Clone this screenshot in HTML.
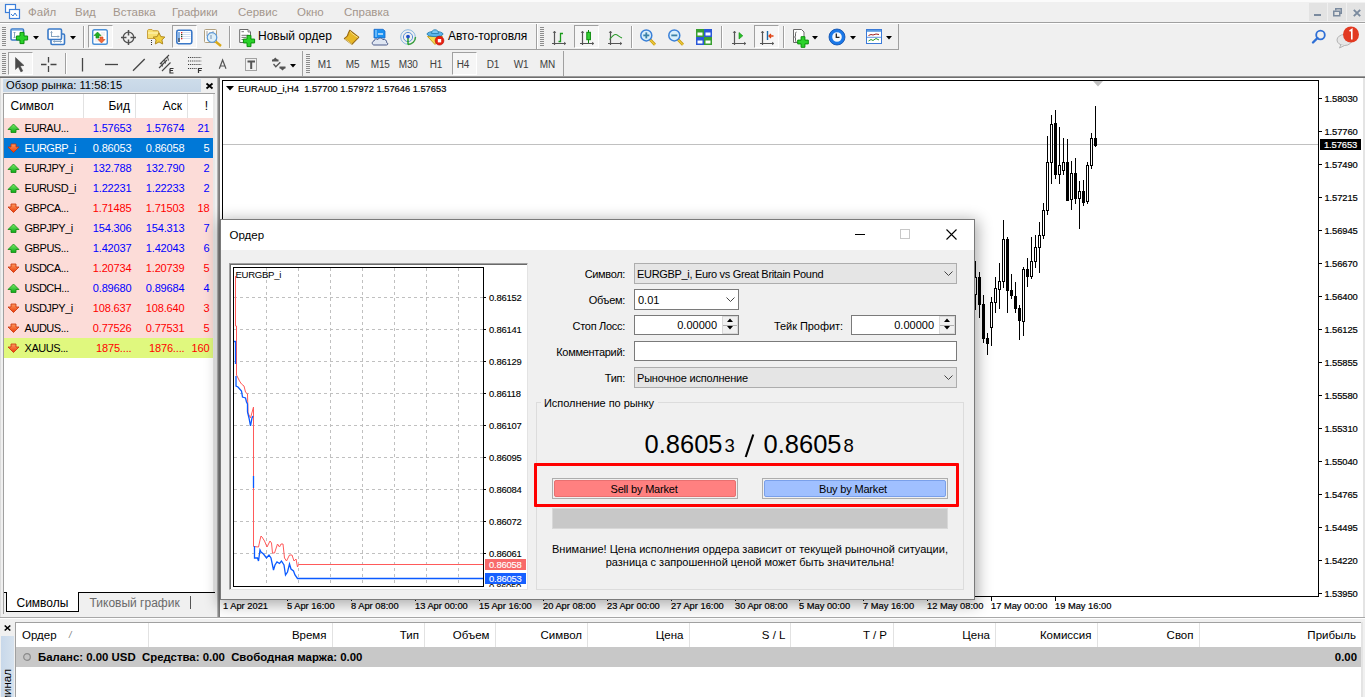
<!DOCTYPE html><html><head><meta charset="utf-8"><style>
*{box-sizing:border-box;margin:0;padding:0}
body{width:1365px;height:697px;overflow:hidden;background:#f0f0f0;position:relative;font-family:"Liberation Sans",sans-serif;color:#000}
.a{position:absolute}
.t{position:absolute;white-space:nowrap;line-height:1}
svg{position:absolute;overflow:visible}
</style></head><body><div class="a" style="left:0px;top:0px;width:1365px;height:22px;background:#f0f0f0"></div>
<svg style="left:4px;top:3px" width="17" height="17" viewBox="0 0 17 17"><rect x="1.5" y="1.5" width="10" height="8" fill="#fff" stroke="#3c7fd9" stroke-width="1.2"/><rect x="5.5" y="6.5" width="10" height="9" fill="#fff" stroke="#3c7fd9" stroke-width="1.2"/><path d="M7 11l2 2 2-3 2 3" stroke="#3c7fd9" fill="none" stroke-width="1"/></svg>
<div class="t" style="left:28px;top:7px;font-size:11.5px;color:#a3968c;">Файл</div>
<div class="t" style="left:75px;top:7px;font-size:11.5px;color:#a3968c;">Вид</div>
<div class="t" style="left:113px;top:7px;font-size:11.5px;color:#a3968c;">Вставка</div>
<div class="t" style="left:172px;top:7px;font-size:11.5px;color:#a3968c;">Графики</div>
<div class="t" style="left:238px;top:7px;font-size:11.5px;color:#a3968c;">Сервис</div>
<div class="t" style="left:297px;top:7px;font-size:11.5px;color:#a3968c;">Окно</div>
<div class="t" style="left:344px;top:7px;font-size:11.5px;color:#a3968c;">Справка</div>
<div class="a" style="left:0px;top:0px;width:1365px;height:2px;background:#fbfbfb"></div>
<div class="a" style="left:1309px;top:3px;width:18px;height:18px;background:#e3e3e3"></div>
<div class="a" style="left:1328px;top:3px;width:18px;height:18px;background:#e3e3e3"></div>
<div class="a" style="left:1347px;top:3px;width:18px;height:18px;background:#e3e3e3"></div>
<div class="a" style="left:1314px;top:14px;width:7px;height:2px;background:#7a8a9e"></div>
<svg style="left:1333px;top:8px" width="9" height="9" viewBox="0 0 9 9"><rect x="0.75" y="3.25" width="6" height="4.5" fill="none" stroke="#7a8a9e" stroke-width="1.5"/><path d="M2.75 2.5V0.75h5.5v4.5H7" fill="none" stroke="#7a8a9e" stroke-width="1.5"/></svg>
<svg style="left:1353px;top:9px" width="8" height="8" viewBox="0 0 8 8"><path d="M0.8 0.8L7.2 7.2M7.2 0.8L0.8 7.2" stroke="#7a8a9e" stroke-width="1.9"/></svg>
<div class="a" style="left:0px;top:22px;width:1365px;height:1px;background:#a0a0a0"></div>
<div class="a" style="left:0px;top:23px;width:1365px;height:1px;background:#fff"></div>
<div class="a" style="left:2px;top:27px;width:4px;height:1px;background:#8c8c8c"></div>
<div class="a" style="left:2px;top:29px;width:4px;height:1px;background:#8c8c8c"></div>
<div class="a" style="left:2px;top:31px;width:4px;height:1px;background:#8c8c8c"></div>
<div class="a" style="left:2px;top:33px;width:4px;height:1px;background:#8c8c8c"></div>
<div class="a" style="left:2px;top:35px;width:4px;height:1px;background:#8c8c8c"></div>
<div class="a" style="left:2px;top:37px;width:4px;height:1px;background:#8c8c8c"></div>
<div class="a" style="left:2px;top:39px;width:4px;height:1px;background:#8c8c8c"></div>
<div class="a" style="left:2px;top:41px;width:4px;height:1px;background:#8c8c8c"></div>
<div class="a" style="left:2px;top:43px;width:4px;height:1px;background:#8c8c8c"></div>
<div class="a" style="left:2px;top:45px;width:4px;height:1px;background:#8c8c8c"></div>
<div class="a" style="left:0px;top:49px;width:899px;height:1px;background:#a0a0a0"></div>
<div class="a" style="left:898px;top:24px;width:1px;height:26px;background:#a0a0a0"></div>
<div class="a" style="left:88px;top:25px;width:25px;height:23px;background:#f6f6f6;border-left:1px solid #a0a0a0;border-top:1px solid #a0a0a0;border-right:1px solid #fff;border-bottom:1px solid #fff"></div>
<div class="a" style="left:172px;top:25px;width:25px;height:23px;background:#f6f6f6;border-left:1px solid #a0a0a0;border-top:1px solid #a0a0a0;border-right:1px solid #fff;border-bottom:1px solid #fff"></div>
<div class="a" style="left:574px;top:25px;width:25px;height:23px;background:#f6f6f6;border-left:1px solid #a0a0a0;border-top:1px solid #a0a0a0;border-right:1px solid #fff;border-bottom:1px solid #fff"></div>
<div class="a" style="left:754px;top:25px;width:25px;height:23px;background:#f6f6f6;border-left:1px solid #a0a0a0;border-top:1px solid #a0a0a0;border-right:1px solid #fff;border-bottom:1px solid #fff"></div>
<svg style="left:0px;top:0px" width="1365" height="80" viewBox="0 0 1365 80"><rect x="11" y="29" width="12.5" height="11" rx="1.2" fill="#fff" stroke="#3a7ac8" stroke-width="1.6"/><path d="M11.5 30.2h11.5" stroke="#7ab0e8"/><path d="M14.5 32v6M13.5 33l1-1 1 1M13.5 37l1 1 1-1" stroke="#7a9ab8" fill="none" stroke-width="0.9"/><path d="M20.0 32.4h4v3.5999999999999996h3.5999999999999996v4h-3.5999999999999996v3.5999999999999996h-4v-3.5999999999999996h-3.5999999999999996v-4h3.5999999999999996z" fill="#2ad22a" stroke="#0a900a" stroke-width="1"/><rect x="51" y="34" width="13.5" height="10.5" rx="1.2" fill="#fff" stroke="#3a7ac8" stroke-width="1.6"/><rect x="48" y="29" width="13.5" height="10.5" rx="1.2" fill="#fff" stroke="#3a7ac8" stroke-width="1.6"/><path d="M51.5 31.5v5M50.5 32.5l1-1 1 1M51 36.5h8M58 35.5l1 1-1 1M53.5 41.5h8M54.5 40.5l-1 1 1 1M60.5 40.5l1 1-1 1" stroke="#7a9ab8" fill="none" stroke-width="0.9"/><rect x="92.7" y="29.7" width="14.6" height="14.6" rx="1.8" fill="#fff" stroke="#4a90d8" stroke-width="1.4"/><path d="M95 37h6M95 39h4M95 41h6M101 33h4M101 35h4" stroke="#d8d8d8" stroke-width="0.7"/><path d="M97.5 32L101 35.5H99v2.5h-3v-2.5H94z" fill="#22b022" stroke="#108a10" stroke-width="0.6"/><path d="M101.5 43L105 39.5H103V37h-3v2.5H98z" fill="#f06a3a" stroke="#d04010" stroke-width="0.6"/><circle cx="128.5" cy="37.5" r="5.3" fill="none" stroke="#555" stroke-width="1.3"/><path d="M128.5 30v5.5M128.5 39.5V45M121 37.5h5.5M130.5 37.5H136" stroke="#505050" stroke-width="1.5"/><path d="M147.5 31c0-1 .6-1.5 1.5-1.5h3l1 1.2h4.5c.8 0 1.2.4 1.2 1.2v6.6h-11.2z" fill="#f8e070" stroke="#c8a040" stroke-width="1"/><path d="M148 33h10" stroke="#fff6c0"/><path d="M159 32.8l1.8 3.8 4.1.5-3 2.8.8 4.1-3.7-2.1-3.7 2.1.8-4.1-3-2.8 4.1-.5z" fill="#f2d040" stroke="#b08a20" stroke-width="1"/><path d="M151.5 40v1M151.5 42v1M151.5 44v1" stroke="#333" stroke-width="1"/><rect x="176.8" y="30.3" width="15" height="13.4" rx="1.6" fill="#fff" stroke="#3a78c8" stroke-width="1.6"/><path d="M179 32v10" stroke="#6aa0e0" stroke-width="1.6"/><path d="M179 38v4" stroke="#444" stroke-width="1.2"/><path d="M182 32.5h8.5M182 34.5h8.5M182 36.5h8.5M182 38.5h8.5" stroke="#c8d8f0" stroke-width="0.8"/><rect x="181" y="32" width="1.3" height="1.3" fill="#e02020"/><rect x="181" y="34" width="1.3" height="1.3" fill="#204020"/><rect x="181" y="36" width="1.3" height="1.3" fill="#204020"/><rect x="181" y="38" width="1.3" height="1.3" fill="#e02020"/><rect x="204.5" y="29.5" width="12" height="13" rx="1" fill="#fbfbf8" stroke="#b0a080" stroke-width="1"/><path d="M207 31v5M209 33h3M213 31v4" stroke="#888" stroke-width="0.8"/><path d="M215.5 41.5l5.5 4.5" stroke="#d8a818" stroke-width="2.4"/><circle cx="212" cy="37.5" r="4.8" fill="#d8ecf8" fill-opacity="0.85" stroke="#5a98d8" stroke-width="1.2"/><path d="M211 35v4" stroke="#9ab0c8" stroke-width="1.5"/><path d="M239.7 29.5h8.3l2.5 2.5v10.5h-10.8z" fill="#fff" stroke="#6a6a6a" stroke-width="1"/><path d="M248 29.5v2.5h2.5" fill="#ddd" stroke="#6a6a6a" stroke-width="0.8"/><path d="M241.5 31.7h2.5M241.5 35.3h7M241.5 37.4h5M241.5 39.5h4" stroke="#777" stroke-width="1"/><path d="M247.05 35.4h3.9v3.6499999999999995h3.6499999999999995v3.9h-3.6499999999999995v3.6499999999999995h-3.9v-3.6499999999999995h-3.6499999999999995v-3.9h3.6499999999999995z" fill="#2ad22a" stroke="#0a900a" stroke-width="1"/><path d="M349.7 30.3l9 7-6.8 7-7.5-5.8c1.2-.8 3.8-2.6 3.8-5z" fill="#e8b828" stroke="#9a6a10" stroke-width="1.1" stroke-linejoin="round"/><path d="M345 38.8l7 5.5M350 31c1 2 4 4 8 6.5" stroke="#fff2a0" stroke-width="0.8" fill="none"/><path d="M374 29.3h9l2 1.7v7h-11z" fill="#1a90f0" stroke="#1868c8" stroke-width="0.8"/><path d="M376 30v7" stroke="#c8e8ff" stroke-width="0.9"/><path d="M378 34h5" stroke="#fff" stroke-width="1.2"/><path d="M374 45c-2.2 0-2.5-3.6 0-4 .2-2 2.5-2.6 3.8-1.5 1-2 4-2 5 0 2.5-.6 4.2 1.2 3.8 3 1.8.4 1.5 2.5 0 2.5z" fill="#dfe6f2" stroke="#4a5a8a" stroke-width="1"/><circle cx="408" cy="37" r="7.3" fill="none" stroke="#8ab8e0" stroke-width="1"/><circle cx="408" cy="37" r="4.6" fill="none" stroke="#5a90d8" stroke-width="1"/><path d="M408 44.5A7.5 7.5 0 0 0 415.5 37" stroke="#3aa03a" stroke-width="1.4" fill="none"/><path d="M408 37v7.5" stroke="#1aa01a" stroke-width="1.4"/><circle cx="408" cy="36.6" r="1.9" fill="#2050c8"/><path d="M427.5 36.5h15L435 44.5z" fill="#f4dc50" stroke="#c8a020" stroke-width="1" stroke-linejoin="round"/><ellipse cx="435" cy="34" rx="8" ry="2.6" fill="#5ab4ea" stroke="#2a80b0" stroke-width="0.9"/><path d="M431.5 33.5c0-2.5 1.5-3.7 3.5-3.7s3.5 1.2 3.5 3.7z" fill="#7ac8f4" stroke="#2a80b0" stroke-width="0.9"/><circle cx="439.5" cy="40.7" r="4.4" fill="#e82010" stroke="#b01008" stroke-width="0.6"/><rect x="437.8" y="39" width="3.4" height="3.4" fill="#fff"/><path d="M554.5 31.5v13.5M552 43.5h13.5" stroke="#555" stroke-width="1.2" fill="none"/><path d="M553.2 32.8l1.3-1.6 1.3 1.6M564.2 42.2l1.6 1.3-1.6 1.3" stroke="#555" stroke-width="1" fill="none"/><path d="M558.5 41.5h2v-8h2.5" stroke="#1a9a1a" stroke-width="1.3" fill="none"/><path d="M582.5 31.5v13.5M580 43.5h13.5" stroke="#555" stroke-width="1.2" fill="none"/><path d="M581.2 32.8l1.3-1.6 1.3 1.6M592.2 42.2l1.6 1.3-1.6 1.3" stroke="#555" stroke-width="1" fill="none"/><path d="M588.5 30v13" stroke="#0a8a0a" stroke-width="1"/><rect x="586.8" y="32.3" width="3.6" height="7.4" fill="#36d236" stroke="#0a8a0a" stroke-width="1"/><path d="M610.5 31.5v13.5M608 43.5h13.5" stroke="#555" stroke-width="1.2" fill="none"/><path d="M609.2 32.8l1.3-1.6 1.3 1.6M620.2 42.2l1.6 1.3-1.6 1.3" stroke="#555" stroke-width="1" fill="none"/><path d="M609.5 39.5c2-2.5 4-5 6-5s3 2 6.5 3.5" stroke="#2a9a2a" stroke-width="1.1" fill="none"/><path d="M650 39.5l5 5.3" stroke="#c89a10" stroke-width="2.8"/><path d="M650.3 39.8l4.5 4.8" stroke="#f0d040" stroke-width="1.2"/><circle cx="646.3" cy="35.4" r="5.5" fill="#d8eefa" stroke="#3a80d8" stroke-width="1.5"/><path d="M643.3 35.4h6" stroke="#3a80a8" stroke-width="1.8"/><path d="M646.3 32.4v6" stroke="#3a80a8" stroke-width="1.8"/><path d="M678 39.5l5 5.3" stroke="#c89a10" stroke-width="2.8"/><path d="M678.3 39.8l4.5 4.8" stroke="#f0d040" stroke-width="1.2"/><circle cx="674.3" cy="35.4" r="5.5" fill="#d8eefa" stroke="#3a80d8" stroke-width="1.5"/><path d="M671.3 35.4h6" stroke="#3a80a8" stroke-width="1.8"/><rect x="696" y="29" width="8" height="8" fill="#38a030"/><rect x="704" y="29" width="8" height="8" fill="#2a58d8"/><rect x="696" y="37" width="8" height="8" fill="#2a58d8"/><rect x="704" y="37" width="8" height="8" fill="#38a030"/><path d="M697.5 32.5h5v3h-5zM705.5 32.5h5v3h-5zM697.5 40.5h5v3h-5zM705.5 40.5h5v3h-5z" fill="#fff"/><path d="M734.5 31.5v13.5M732 43.5h13.5" stroke="#555" stroke-width="1.2" fill="none"/><path d="M733.2 32.8l1.3-1.6 1.3 1.6M744.2 42.2l1.6 1.3-1.6 1.3" stroke="#555" stroke-width="1" fill="none"/><path d="M739 32.5v6.5l3.8-3.2z" fill="#28c028" stroke="#108a10" stroke-width="0.6"/><path d="M762.5 31.5v13.5M760 43.5h13.5" stroke="#555" stroke-width="1.2" fill="none"/><path d="M761.2 32.8l1.3-1.6 1.3 1.6M772.2 42.2l1.6 1.3-1.6 1.3" stroke="#555" stroke-width="1" fill="none"/><path d="M767.5 31v9" stroke="#1a6aa8" stroke-width="1.4"/><path d="M773.5 36h-4.5M771 34l-2 2 2 2" stroke="#e04010" stroke-width="1.3" fill="none"/><path d="M793.5 29.5h8l2.5 2.5v10.5h-10.5z" fill="#fff" stroke="#6a6a6a" stroke-width="1"/><path d="M796.5 32c-1 0-1 1-1 2v2c0 1-1 1-1 1 0 0 1 0 1 1v2c0 1 0 2 1 2" stroke="#555" fill="none" stroke-width="0.9"/><path d="M801.1 36.7h3.8v3.4h3.4v3.8h-3.4v3.4h-3.8v-3.4h-3.4v-3.8h3.4z" fill="#2ad22a" stroke="#0a900a" stroke-width="1"/><circle cx="837" cy="37" r="6.4" fill="#f4f8fc" stroke="#1a78e8" stroke-width="3.2"/><circle cx="837" cy="37" r="8" fill="none" stroke="#0a4aa8" stroke-width="0.8"/><path d="M836.3 33.5v3.8h3.2" stroke="#222" stroke-width="1.3" fill="none"/><rect x="866.5" y="29.5" width="15" height="14" fill="#fff" stroke="#3a7ad8" stroke-width="1"/><rect x="867" y="30" width="14" height="1.8" fill="#5a9ae0"/><path d="M867 37.3h14" stroke="#3a7ad8" stroke-width="0.8"/><path d="M868.5 35.5l2.5-1 2 .5 3-1 3 .5" stroke="#a02020" fill="none"/><path d="M868.5 41l2.5-1.5 2 1 3-2 3 1.5" stroke="#2a9a2a" fill="none"/></svg>
<svg style="left:33px;top:36px" width="6" height="4" viewBox="0 0 6 4"><path d="M0 0h6L3 3.5z" fill="#000"/></svg>
<svg style="left:70px;top:36px" width="6" height="4" viewBox="0 0 6 4"><path d="M0 0h6L3 3.5z" fill="#000"/></svg>
<div class="a" style="left:83px;top:26px;width:1px;height:22px;background:#a0a0a0"></div>
<div class="a" style="left:84px;top:26px;width:1px;height:22px;background:#fff"></div>
<div class="a" style="left:229px;top:26px;width:1px;height:22px;background:#a0a0a0"></div>
<div class="a" style="left:230px;top:26px;width:1px;height:22px;background:#fff"></div>
<div class="t" style="left:258px;top:30px;font-size:12px;color:#000;">Новый ордер</div>
<div class="t" style="left:448px;top:30px;font-size:12px;color:#000;">Авто-торговля</div>
<div class="a" style="left:536px;top:24px;width:1px;height:25px;background:#a0a0a0"></div>
<div class="a" style="left:537px;top:24px;width:1px;height:25px;background:#fff"></div>
<div class="a" style="left:540px;top:27px;width:4px;height:1px;background:#8c8c8c"></div>
<div class="a" style="left:540px;top:29px;width:4px;height:1px;background:#8c8c8c"></div>
<div class="a" style="left:540px;top:31px;width:4px;height:1px;background:#8c8c8c"></div>
<div class="a" style="left:540px;top:33px;width:4px;height:1px;background:#8c8c8c"></div>
<div class="a" style="left:540px;top:35px;width:4px;height:1px;background:#8c8c8c"></div>
<div class="a" style="left:540px;top:37px;width:4px;height:1px;background:#8c8c8c"></div>
<div class="a" style="left:540px;top:39px;width:4px;height:1px;background:#8c8c8c"></div>
<div class="a" style="left:540px;top:41px;width:4px;height:1px;background:#8c8c8c"></div>
<div class="a" style="left:540px;top:43px;width:4px;height:1px;background:#8c8c8c"></div>
<div class="a" style="left:540px;top:45px;width:4px;height:1px;background:#8c8c8c"></div>
<div class="a" style="left:631px;top:26px;width:1px;height:22px;background:#a0a0a0"></div>
<div class="a" style="left:632px;top:26px;width:1px;height:22px;background:#fff"></div>
<div class="a" style="left:721px;top:26px;width:1px;height:22px;background:#a0a0a0"></div>
<div class="a" style="left:722px;top:26px;width:1px;height:22px;background:#fff"></div>
<div class="a" style="left:783px;top:26px;width:1px;height:22px;background:#a0a0a0"></div>
<div class="a" style="left:784px;top:26px;width:1px;height:22px;background:#fff"></div>
<svg style="left:812px;top:36px" width="6" height="4" viewBox="0 0 6 4"><path d="M0 0h6L3 3.5z" fill="#000"/></svg>
<svg style="left:850px;top:36px" width="6" height="4" viewBox="0 0 6 4"><path d="M0 0h6L3 3.5z" fill="#000"/></svg>
<svg style="left:886px;top:36px" width="6" height="4" viewBox="0 0 6 4"><path d="M0 0h6L3 3.5z" fill="#000"/></svg>
<div class="a" style="left:2px;top:53px;width:4px;height:1px;background:#8c8c8c"></div>
<div class="a" style="left:2px;top:55px;width:4px;height:1px;background:#8c8c8c"></div>
<div class="a" style="left:2px;top:57px;width:4px;height:1px;background:#8c8c8c"></div>
<div class="a" style="left:2px;top:59px;width:4px;height:1px;background:#8c8c8c"></div>
<div class="a" style="left:2px;top:61px;width:4px;height:1px;background:#8c8c8c"></div>
<div class="a" style="left:2px;top:63px;width:4px;height:1px;background:#8c8c8c"></div>
<div class="a" style="left:2px;top:65px;width:4px;height:1px;background:#8c8c8c"></div>
<div class="a" style="left:2px;top:67px;width:4px;height:1px;background:#8c8c8c"></div>
<div class="a" style="left:2px;top:69px;width:4px;height:1px;background:#8c8c8c"></div>
<div class="a" style="left:2px;top:71px;width:4px;height:1px;background:#8c8c8c"></div>
<div class="a" style="left:2px;top:73px;width:4px;height:1px;background:#8c8c8c"></div>
<div class="a" style="left:8px;top:52px;width:25px;height:23px;background:#f6f6f6;border-left:1px solid #a0a0a0;border-top:1px solid #a0a0a0;border-right:1px solid #fff;border-bottom:1px solid #fff"></div>
<svg style="left:0px;top:0px" width="1365" height="80" viewBox="0 0 1365 80"><path d="M15.5 57.5l8.5 8-3.8.4 2.6 5-1.9 1-2.6-5.1-2.8 2.7z" fill="#4a4a4a" stroke="#444" stroke-width="0.5" stroke-linejoin="round"/><path d="M48.5 57v5.5M48.5 66v6M41 64.5h5.5M50.5 64.5h6" stroke="#454545" stroke-width="1.3"/><path d="M82.5 58v13.5" stroke="#454545" stroke-width="1.3"/><path d="M105 64.5h13" stroke="#454545" stroke-width="1.3"/><path d="M133 70.8L144.7 59" stroke="#454545" stroke-width="1.3"/><path d="M159 68l8-8M162 71l8.5-8.5M160 64l9-9" stroke="#454545" stroke-width="1.1"/><path d="M161.5 62.5l1 4M164.5 59.5l1 4M167.5 57l1 3.5" stroke="#454545" stroke-width="1"/><path d="M170 68.5h3.5M170 68.5v4.5h3.5M170 70.5h3" stroke="#333" stroke-width="1.2" fill="none"/><path d="M188 57.5h13.5" stroke="#333" stroke-dasharray="1 0.9" stroke-width="1"/><path d="M188 61h13.5" stroke="#333" stroke-dasharray="1 0.9" stroke-width="1"/><path d="M188 64.5h13.5" stroke="#333" stroke-dasharray="1 0.9" stroke-width="1"/><path d="M188 68.5h9" stroke="#333" stroke-dasharray="1 0.9" stroke-width="1"/><path d="M198.5 73v-4.5h3.5M198.5 70.5h3" stroke="#333" stroke-width="1.2" fill="none"/><path d="M219.3 68.8l3.3-8.8 3.4 8.8M220.5 66h4.3" stroke="#555" stroke-width="1.2" fill="none"/><rect x="245.5" y="58.5" width="11" height="12" fill="none" stroke="#555" stroke-dasharray="1 1" stroke-width="1"/><path d="M247.5 61.5h7.5M251.2 61.5v7.5" stroke="#555" stroke-width="2"/><path d="M275.3 57.5l3 3h-6zM282.5 70.5l-3-3h6z" fill="#555"/><path d="M273.5 64l2.3 2.7 4.5-4.5" stroke="#555" stroke-width="1.3" fill="none"/><path d="M272 60.5h6.5M279.5 67.5h6" stroke="#555" stroke-width="2"/></svg>
<div class="a" style="left:65px;top:53px;width:1px;height:21px;background:#a0a0a0"></div>
<div class="a" style="left:66px;top:53px;width:1px;height:21px;background:#fff"></div>
<svg style="left:290px;top:64px" width="6" height="4" viewBox="0 0 6 4"><path d="M0 0h6L3 3.5z" fill="#000"/></svg>
<div class="a" style="left:302px;top:51px;width:1px;height:26px;background:#a0a0a0"></div>
<div class="a" style="left:306px;top:54px;width:4px;height:1px;background:#8c8c8c"></div>
<div class="a" style="left:306px;top:56px;width:4px;height:1px;background:#8c8c8c"></div>
<div class="a" style="left:306px;top:58px;width:4px;height:1px;background:#8c8c8c"></div>
<div class="a" style="left:306px;top:60px;width:4px;height:1px;background:#8c8c8c"></div>
<div class="a" style="left:306px;top:62px;width:4px;height:1px;background:#8c8c8c"></div>
<div class="a" style="left:306px;top:64px;width:4px;height:1px;background:#8c8c8c"></div>
<div class="a" style="left:306px;top:66px;width:4px;height:1px;background:#8c8c8c"></div>
<div class="a" style="left:306px;top:68px;width:4px;height:1px;background:#8c8c8c"></div>
<div class="a" style="left:306px;top:70px;width:4px;height:1px;background:#8c8c8c"></div>
<div class="a" style="left:306px;top:72px;width:4px;height:1px;background:#8c8c8c"></div>
<div class="a" style="left:452px;top:52px;width:25px;height:23px;background:#f6f6f6;border-left:1px solid #a0a0a0;border-top:1px solid #a0a0a0;border-right:1px solid #fff;border-bottom:1px solid #fff"></div>
<div class="t" style="left:317.8px;top:59.8px;font-size:10px;color:#404040;letter-spacing:-0.2px">M1</div>
<div class="t" style="left:345.8px;top:59.8px;font-size:10px;color:#404040;letter-spacing:-0.2px">M5</div>
<div class="t" style="left:370.8px;top:59.8px;font-size:10px;color:#404040;letter-spacing:-0.2px">M15</div>
<div class="t" style="left:398.8px;top:59.8px;font-size:10px;color:#404040;letter-spacing:-0.2px">M30</div>
<div class="t" style="left:429.8px;top:59.8px;font-size:10px;color:#404040;letter-spacing:-0.2px">H1</div>
<div class="t" style="left:456.8px;top:59.8px;font-size:10px;color:#404040;letter-spacing:-0.2px">H4</div>
<div class="t" style="left:486.8px;top:59.8px;font-size:10px;color:#404040;letter-spacing:-0.2px">D1</div>
<div class="t" style="left:513.8px;top:59.8px;font-size:10px;color:#404040;letter-spacing:-0.2px">W1</div>
<div class="t" style="left:539.8px;top:59.8px;font-size:10px;color:#404040;letter-spacing:-0.2px">MN</div>
<div class="a" style="left:563px;top:51px;width:1px;height:26px;background:#a0a0a0"></div>
<svg style="left:1311px;top:29px" width="16" height="16" viewBox="0 0 16 16"><circle cx="9.5" cy="6" r="4.3" fill="none" stroke="#2e6fd6" stroke-width="1.8"/><path d="M6.5 9L2 13.5" stroke="#2e6fd6" stroke-width="2.4" stroke-linecap="round"/></svg>
<svg style="left:1336px;top:26px" width="26" height="22" viewBox="0 0 26 22"><ellipse cx="8.5" cy="14" rx="7.5" ry="5.5" fill="#e6e6e6" stroke="#b4b4b4"/><path d="M5 18.5l-1.5 3.5 5-2.5" fill="#e6e6e6" stroke="#b4b4b4"/><circle cx="15" cy="8.5" r="8" fill="#e23a22"/><path d="M13.5 5.2L15.8 3.6V13.5" stroke="#fff" stroke-width="1.6" fill="none"/></svg>
<div class="a" style="left:0px;top:76px;width:1365px;height:1px;background:#9a9a9a"></div>
<div class="a" style="left:0px;top:77px;width:1365px;height:1px;background:#6e6e6e"></div>
<div class="a" style="left:0px;top:78px;width:1px;height:540px;background:#dcdcdc"></div>
<div class="a" style="left:217px;top:78px;width:1px;height:540px;background:#b4b4b4"></div>
<div class="a" style="left:218px;top:78px;width:1px;height:540px;background:#8a8a8a"></div>
<div class="a" style="left:3px;top:79px;width:198px;height:13px;background:linear-gradient(#cddcea,#c6d6e6)"></div>
<div class="t" style="left:6px;top:80px;font-size:11.2px;color:#000;">Обзор рынка: 11:58:15</div>
<svg style="left:206px;top:83px" width="7" height="6" viewBox="0 0 7 6"><path d="M0.5 0.5l6 5M6.5 0.5l-6 5" stroke="#000" stroke-width="1.8"/></svg>
<div class="a" style="left:3px;top:93px;width:212px;height:1px;background:#a0a0a0"></div>
<div class="a" style="left:3px;top:93px;width:1px;height:521px;background:#a0a0a0"></div>
<div class="a" style="left:4px;top:94px;width:209px;height:498px;background:#fff"></div>
<div class="a" style="left:213px;top:94px;width:2px;height:498px;background:#e8e8e8"></div>
<div class="a" style="left:83px;top:94px;width:1px;height:24px;background:#e2e2e2"></div>
<div class="a" style="left:135px;top:94px;width:1px;height:24px;background:#e2e2e2"></div>
<div class="a" style="left:187px;top:94px;width:1px;height:24px;background:#e2e2e2"></div>
<div class="t" style="left:10.5px;top:100px;font-size:12px;color:#000;">Символ</div>
<div class="t" style="right:1235px;top:100px;font-size:12px;color:#000;">Бид</div>
<div class="t" style="right:1183px;top:100px;font-size:12px;color:#000;">Аск</div>
<div class="t" style="right:1157px;top:100px;font-size:12px;color:#000;">!</div>
<svg style="left:0px;top:0px" width="1" height="1" viewBox="0 0 1 1"><defs><linearGradient id="gu" x1="0" y1="0" x2="0" y2="1"><stop offset="0" stop-color="#7aec6a"/><stop offset="1" stop-color="#10a818"/></linearGradient><linearGradient id="gd" x1="0" y1="0" x2="0" y2="1"><stop offset="0" stop-color="#ff9a60"/><stop offset="1" stop-color="#e83a08"/></linearGradient></defs></svg>
<div class="a" style="left:4px;top:118px;width:209px;height:20px;background:#fcdcd8"></div>
<svg style="left:8px;top:123px" width="11" height="10" viewBox="0 0 11 10"><path d="M5.5 1L11 6.5H8V9.5H3V6.5H0z" fill="url(#gu)" stroke="#108a10" stroke-width="0.8" stroke-linejoin="round"/></svg>
<div class="t" style="left:24.5px;top:122.8px;font-size:11px;color:#000;letter-spacing:-0.45px">EURAU...</div>
<div class="t" style="right:1233.5px;top:122.8px;font-size:11px;color:#0000ff;letter-spacing:-0.15px">1.57653</div>
<div class="t" style="right:1180.5px;top:122.8px;font-size:11px;color:#0000ff;letter-spacing:-0.15px">1.57674</div>
<div class="t" style="right:1155.5px;top:122.8px;font-size:11px;color:#0000ff;letter-spacing:-0.15px">21</div>
<div class="a" style="left:4px;top:138px;width:209px;height:20px;background:#0078d7"></div>
<svg style="left:8px;top:143px" width="11" height="10" viewBox="0 0 11 10"><path d="M5.5 9.5L11 4H8V1H3V4H0z" fill="url(#gd)" stroke="#c83008" stroke-width="0.8" stroke-linejoin="round"/></svg>
<div class="t" style="left:24.5px;top:142.8px;font-size:11px;color:#fff;letter-spacing:-0.45px">EURGBP_i</div>
<div class="t" style="right:1233.5px;top:142.8px;font-size:11px;color:#fff;letter-spacing:-0.15px">0.86053</div>
<div class="t" style="right:1180.5px;top:142.8px;font-size:11px;color:#fff;letter-spacing:-0.15px">0.86058</div>
<div class="t" style="right:1155.5px;top:142.8px;font-size:11px;color:#fff;letter-spacing:-0.15px">5</div>
<div class="a" style="left:4px;top:158px;width:209px;height:20px;background:#fcdcd8"></div>
<svg style="left:8px;top:163px" width="11" height="10" viewBox="0 0 11 10"><path d="M5.5 1L11 6.5H8V9.5H3V6.5H0z" fill="url(#gu)" stroke="#108a10" stroke-width="0.8" stroke-linejoin="round"/></svg>
<div class="t" style="left:24.5px;top:162.8px;font-size:11px;color:#000;letter-spacing:-0.45px">EURJPY_i</div>
<div class="t" style="right:1233.5px;top:162.8px;font-size:11px;color:#0000ff;letter-spacing:-0.15px">132.788</div>
<div class="t" style="right:1180.5px;top:162.8px;font-size:11px;color:#0000ff;letter-spacing:-0.15px">132.790</div>
<div class="t" style="right:1155.5px;top:162.8px;font-size:11px;color:#0000ff;letter-spacing:-0.15px">2</div>
<div class="a" style="left:4px;top:178px;width:209px;height:20px;background:#fcdcd8"></div>
<svg style="left:8px;top:183px" width="11" height="10" viewBox="0 0 11 10"><path d="M5.5 1L11 6.5H8V9.5H3V6.5H0z" fill="url(#gu)" stroke="#108a10" stroke-width="0.8" stroke-linejoin="round"/></svg>
<div class="t" style="left:24.5px;top:182.8px;font-size:11px;color:#000;letter-spacing:-0.45px">EURUSD_i</div>
<div class="t" style="right:1233.5px;top:182.8px;font-size:11px;color:#0000ff;letter-spacing:-0.15px">1.22231</div>
<div class="t" style="right:1180.5px;top:182.8px;font-size:11px;color:#0000ff;letter-spacing:-0.15px">1.22233</div>
<div class="t" style="right:1155.5px;top:182.8px;font-size:11px;color:#0000ff;letter-spacing:-0.15px">2</div>
<div class="a" style="left:4px;top:198px;width:209px;height:20px;background:#fcdcd8"></div>
<svg style="left:8px;top:203px" width="11" height="10" viewBox="0 0 11 10"><path d="M5.5 9.5L11 4H8V1H3V4H0z" fill="url(#gd)" stroke="#c83008" stroke-width="0.8" stroke-linejoin="round"/></svg>
<div class="t" style="left:24.5px;top:202.8px;font-size:11px;color:#000;letter-spacing:-0.45px">GBPCA...</div>
<div class="t" style="right:1233.5px;top:202.8px;font-size:11px;color:#ff0000;letter-spacing:-0.15px">1.71485</div>
<div class="t" style="right:1180.5px;top:202.8px;font-size:11px;color:#ff0000;letter-spacing:-0.15px">1.71503</div>
<div class="t" style="right:1155.5px;top:202.8px;font-size:11px;color:#ff0000;letter-spacing:-0.15px">18</div>
<div class="a" style="left:4px;top:218px;width:209px;height:20px;background:#fcdcd8"></div>
<svg style="left:8px;top:223px" width="11" height="10" viewBox="0 0 11 10"><path d="M5.5 1L11 6.5H8V9.5H3V6.5H0z" fill="url(#gu)" stroke="#108a10" stroke-width="0.8" stroke-linejoin="round"/></svg>
<div class="t" style="left:24.5px;top:222.8px;font-size:11px;color:#000;letter-spacing:-0.45px">GBPJPY_i</div>
<div class="t" style="right:1233.5px;top:222.8px;font-size:11px;color:#0000ff;letter-spacing:-0.15px">154.306</div>
<div class="t" style="right:1180.5px;top:222.8px;font-size:11px;color:#0000ff;letter-spacing:-0.15px">154.313</div>
<div class="t" style="right:1155.5px;top:222.8px;font-size:11px;color:#0000ff;letter-spacing:-0.15px">7</div>
<div class="a" style="left:4px;top:238px;width:209px;height:20px;background:#fcdcd8"></div>
<svg style="left:8px;top:243px" width="11" height="10" viewBox="0 0 11 10"><path d="M5.5 1L11 6.5H8V9.5H3V6.5H0z" fill="url(#gu)" stroke="#108a10" stroke-width="0.8" stroke-linejoin="round"/></svg>
<div class="t" style="left:24.5px;top:242.8px;font-size:11px;color:#000;letter-spacing:-0.45px">GBPUS...</div>
<div class="t" style="right:1233.5px;top:242.8px;font-size:11px;color:#0000ff;letter-spacing:-0.15px">1.42037</div>
<div class="t" style="right:1180.5px;top:242.8px;font-size:11px;color:#0000ff;letter-spacing:-0.15px">1.42043</div>
<div class="t" style="right:1155.5px;top:242.8px;font-size:11px;color:#0000ff;letter-spacing:-0.15px">6</div>
<div class="a" style="left:4px;top:258px;width:209px;height:20px;background:#fcdcd8"></div>
<svg style="left:8px;top:263px" width="11" height="10" viewBox="0 0 11 10"><path d="M5.5 9.5L11 4H8V1H3V4H0z" fill="url(#gd)" stroke="#c83008" stroke-width="0.8" stroke-linejoin="round"/></svg>
<div class="t" style="left:24.5px;top:262.8px;font-size:11px;color:#000;letter-spacing:-0.45px">USDCA...</div>
<div class="t" style="right:1233.5px;top:262.8px;font-size:11px;color:#ff0000;letter-spacing:-0.15px">1.20734</div>
<div class="t" style="right:1180.5px;top:262.8px;font-size:11px;color:#ff0000;letter-spacing:-0.15px">1.20739</div>
<div class="t" style="right:1155.5px;top:262.8px;font-size:11px;color:#ff0000;letter-spacing:-0.15px">5</div>
<div class="a" style="left:4px;top:278px;width:209px;height:20px;background:#fcdcd8"></div>
<svg style="left:8px;top:283px" width="11" height="10" viewBox="0 0 11 10"><path d="M5.5 1L11 6.5H8V9.5H3V6.5H0z" fill="url(#gu)" stroke="#108a10" stroke-width="0.8" stroke-linejoin="round"/></svg>
<div class="t" style="left:24.5px;top:282.8px;font-size:11px;color:#000;letter-spacing:-0.45px">USDCH...</div>
<div class="t" style="right:1233.5px;top:282.8px;font-size:11px;color:#0000ff;letter-spacing:-0.15px">0.89680</div>
<div class="t" style="right:1180.5px;top:282.8px;font-size:11px;color:#0000ff;letter-spacing:-0.15px">0.89684</div>
<div class="t" style="right:1155.5px;top:282.8px;font-size:11px;color:#0000ff;letter-spacing:-0.15px">4</div>
<div class="a" style="left:4px;top:298px;width:209px;height:20px;background:#fcdcd8"></div>
<svg style="left:8px;top:303px" width="11" height="10" viewBox="0 0 11 10"><path d="M5.5 9.5L11 4H8V1H3V4H0z" fill="url(#gd)" stroke="#c83008" stroke-width="0.8" stroke-linejoin="round"/></svg>
<div class="t" style="left:24.5px;top:302.8px;font-size:11px;color:#000;letter-spacing:-0.45px">USDJPY_i</div>
<div class="t" style="right:1233.5px;top:302.8px;font-size:11px;color:#ff0000;letter-spacing:-0.15px">108.637</div>
<div class="t" style="right:1180.5px;top:302.8px;font-size:11px;color:#ff0000;letter-spacing:-0.15px">108.640</div>
<div class="t" style="right:1155.5px;top:302.8px;font-size:11px;color:#ff0000;letter-spacing:-0.15px">3</div>
<div class="a" style="left:4px;top:318px;width:209px;height:20px;background:#fcdcd8"></div>
<svg style="left:8px;top:323px" width="11" height="10" viewBox="0 0 11 10"><path d="M5.5 9.5L11 4H8V1H3V4H0z" fill="url(#gd)" stroke="#c83008" stroke-width="0.8" stroke-linejoin="round"/></svg>
<div class="t" style="left:24.5px;top:322.8px;font-size:11px;color:#000;letter-spacing:-0.45px">AUDUS...</div>
<div class="t" style="right:1233.5px;top:322.8px;font-size:11px;color:#ff0000;letter-spacing:-0.15px">0.77526</div>
<div class="t" style="right:1180.5px;top:322.8px;font-size:11px;color:#ff0000;letter-spacing:-0.15px">0.77531</div>
<div class="t" style="right:1155.5px;top:322.8px;font-size:11px;color:#ff0000;letter-spacing:-0.15px">5</div>
<div class="a" style="left:4px;top:338px;width:209px;height:20px;background:#e0f87e"></div>
<svg style="left:8px;top:343px" width="11" height="10" viewBox="0 0 11 10"><path d="M5.5 9.5L11 4H8V1H3V4H0z" fill="url(#gd)" stroke="#c83008" stroke-width="0.8" stroke-linejoin="round"/></svg>
<div class="t" style="left:24.5px;top:342.8px;font-size:11px;color:#000;letter-spacing:-0.45px">XAUUS...</div>
<div class="t" style="right:1233.5px;top:342.8px;font-size:11px;color:#ff0000;letter-spacing:-0.15px">1875....</div>
<div class="t" style="right:1180.5px;top:342.8px;font-size:11px;color:#ff0000;letter-spacing:-0.15px">1876....</div>
<div class="t" style="right:1155.5px;top:342.8px;font-size:11px;color:#ff0000;letter-spacing:-0.15px">160</div>
<div class="a" style="left:4px;top:592px;width:211px;height:1px;background:#000"></div>
<div class="a" style="left:6px;top:592px;width:73px;height:20px;background:#fff;border-left:1px solid #000;border-right:1px solid #000;border-bottom:1px solid #000"></div>
<div class="t" style="left:16.5px;top:597px;font-size:12px;color:#000;">Символы</div>
<div class="t" style="left:89.5px;top:597px;font-size:12px;color:#6a6a6a;">Тиковый график</div>
<div class="a" style="left:190px;top:596px;width:1px;height:13px;background:#555"></div>
<div class="a" style="left:219px;top:78px;width:1146px;height:540px;background:#fff"></div>
<div class="a" style="left:219px;top:78px;width:1px;height:540px;background:#7a7a7a"></div>
<div class="a" style="left:1363px;top:78px;width:2px;height:540px;background:#e4e4e4"></div>
<div class="a" style="left:222px;top:80px;width:1097px;height:517px;border:1px solid #000"></div>
<svg style="left:226px;top:86px" width="8" height="5" viewBox="0 0 8 5"><path d="M0 0h8L4 4.5z" fill="#000"/></svg>
<div class="t" style="left:238px;top:84.5px;font-size:9.3px;color:#000;-webkit-text-stroke:0.2px #000">EURAUD_i,H4&nbsp; 1.57700 1.57972 1.57646 1.57653</div>
<svg style="left:1093px;top:81px" width="10" height="6" viewBox="0 0 10 6"><path d="M0 0h10L5 5.5z" fill="#c0c0c0"/></svg>
<div class="a" style="left:223px;top:144px;width:1095px;height:1px;background:#c0c0c0"></div>
<div class="a" style="left:1319px;top:98px;width:3px;height:1px;background:#000"></div>
<div class="t" style="left:1324.5px;top:94.0px;font-size:9.4px;color:#000;letter-spacing:-0.1px;-webkit-text-stroke:0.2px #000">1.58030</div>
<div class="a" style="left:1319px;top:131px;width:3px;height:1px;background:#000"></div>
<div class="t" style="left:1324.5px;top:127.0px;font-size:9.4px;color:#000;letter-spacing:-0.1px;-webkit-text-stroke:0.2px #000">1.57760</div>
<div class="a" style="left:1319px;top:164px;width:3px;height:1px;background:#000"></div>
<div class="t" style="left:1324.5px;top:160.0px;font-size:9.4px;color:#000;letter-spacing:-0.1px;-webkit-text-stroke:0.2px #000">1.57490</div>
<div class="a" style="left:1319px;top:197px;width:3px;height:1px;background:#000"></div>
<div class="t" style="left:1324.5px;top:193.0px;font-size:9.4px;color:#000;letter-spacing:-0.1px;-webkit-text-stroke:0.2px #000">1.57215</div>
<div class="a" style="left:1319px;top:230px;width:3px;height:1px;background:#000"></div>
<div class="t" style="left:1324.5px;top:226.0px;font-size:9.4px;color:#000;letter-spacing:-0.1px;-webkit-text-stroke:0.2px #000">1.56945</div>
<div class="a" style="left:1319px;top:263px;width:3px;height:1px;background:#000"></div>
<div class="t" style="left:1324.5px;top:259.0px;font-size:9.4px;color:#000;letter-spacing:-0.1px;-webkit-text-stroke:0.2px #000">1.56670</div>
<div class="a" style="left:1319px;top:296px;width:3px;height:1px;background:#000"></div>
<div class="t" style="left:1324.5px;top:292.0px;font-size:9.4px;color:#000;letter-spacing:-0.1px;-webkit-text-stroke:0.2px #000">1.56400</div>
<div class="a" style="left:1319px;top:329px;width:3px;height:1px;background:#000"></div>
<div class="t" style="left:1324.5px;top:325.0px;font-size:9.4px;color:#000;letter-spacing:-0.1px;-webkit-text-stroke:0.2px #000">1.56125</div>
<div class="a" style="left:1319px;top:362px;width:3px;height:1px;background:#000"></div>
<div class="t" style="left:1324.5px;top:358.0px;font-size:9.4px;color:#000;letter-spacing:-0.1px;-webkit-text-stroke:0.2px #000">1.55855</div>
<div class="a" style="left:1319px;top:395px;width:3px;height:1px;background:#000"></div>
<div class="t" style="left:1324.5px;top:391.0px;font-size:9.4px;color:#000;letter-spacing:-0.1px;-webkit-text-stroke:0.2px #000">1.55580</div>
<div class="a" style="left:1319px;top:428px;width:3px;height:1px;background:#000"></div>
<div class="t" style="left:1324.5px;top:424.0px;font-size:9.4px;color:#000;letter-spacing:-0.1px;-webkit-text-stroke:0.2px #000">1.55310</div>
<div class="a" style="left:1319px;top:461px;width:3px;height:1px;background:#000"></div>
<div class="t" style="left:1324.5px;top:457.0px;font-size:9.4px;color:#000;letter-spacing:-0.1px;-webkit-text-stroke:0.2px #000">1.55040</div>
<div class="a" style="left:1319px;top:494px;width:3px;height:1px;background:#000"></div>
<div class="t" style="left:1324.5px;top:490.0px;font-size:9.4px;color:#000;letter-spacing:-0.1px;-webkit-text-stroke:0.2px #000">1.54765</div>
<div class="a" style="left:1319px;top:527px;width:3px;height:1px;background:#000"></div>
<div class="t" style="left:1324.5px;top:523.0px;font-size:9.4px;color:#000;letter-spacing:-0.1px;-webkit-text-stroke:0.2px #000">1.54495</div>
<div class="a" style="left:1319px;top:560px;width:3px;height:1px;background:#000"></div>
<div class="t" style="left:1324.5px;top:556.0px;font-size:9.4px;color:#000;letter-spacing:-0.1px;-webkit-text-stroke:0.2px #000">1.54220</div>
<div class="a" style="left:1319px;top:593px;width:3px;height:1px;background:#000"></div>
<div class="t" style="left:1324.5px;top:589.0px;font-size:9.4px;color:#000;letter-spacing:-0.1px;-webkit-text-stroke:0.2px #000">1.53950</div>
<div class="a" style="left:1320px;top:139px;width:41px;height:11px;background:#000"></div>
<div class="t" style="left:1324px;top:140px;font-size:9.4px;color:#fff;letter-spacing:-0.1px;-webkit-text-stroke:0.2px #fff">1.57653</div>
<div class="t" style="left:223px;top:601.5px;font-size:9.3px;color:#000;-webkit-text-stroke:0.2px #000">1 Apr 2021</div>
<div class="a" style="left:287px;top:597px;width:1px;height:4px;background:#000"></div>
<div class="t" style="left:287px;top:601.5px;font-size:9.3px;color:#000;-webkit-text-stroke:0.2px #000">5 Apr 16:00</div>
<div class="a" style="left:351px;top:597px;width:1px;height:4px;background:#000"></div>
<div class="t" style="left:351px;top:601.5px;font-size:9.3px;color:#000;-webkit-text-stroke:0.2px #000">8 Apr 08:00</div>
<div class="a" style="left:415px;top:597px;width:1px;height:4px;background:#000"></div>
<div class="t" style="left:415px;top:601.5px;font-size:9.3px;color:#000;-webkit-text-stroke:0.2px #000">13 Apr 00:00</div>
<div class="a" style="left:479px;top:597px;width:1px;height:4px;background:#000"></div>
<div class="t" style="left:479px;top:601.5px;font-size:9.3px;color:#000;-webkit-text-stroke:0.2px #000">15 Apr 16:00</div>
<div class="a" style="left:543px;top:597px;width:1px;height:4px;background:#000"></div>
<div class="t" style="left:543px;top:601.5px;font-size:9.3px;color:#000;-webkit-text-stroke:0.2px #000">20 Apr 08:00</div>
<div class="a" style="left:607px;top:597px;width:1px;height:4px;background:#000"></div>
<div class="t" style="left:607px;top:601.5px;font-size:9.3px;color:#000;-webkit-text-stroke:0.2px #000">23 Apr 00:00</div>
<div class="a" style="left:671px;top:597px;width:1px;height:4px;background:#000"></div>
<div class="t" style="left:671px;top:601.5px;font-size:9.3px;color:#000;-webkit-text-stroke:0.2px #000">27 Apr 16:00</div>
<div class="a" style="left:735px;top:597px;width:1px;height:4px;background:#000"></div>
<div class="t" style="left:735px;top:601.5px;font-size:9.3px;color:#000;-webkit-text-stroke:0.2px #000">30 Apr 08:00</div>
<div class="a" style="left:799px;top:597px;width:1px;height:4px;background:#000"></div>
<div class="t" style="left:799px;top:601.5px;font-size:9.3px;color:#000;-webkit-text-stroke:0.2px #000">5 May 00:00</div>
<div class="a" style="left:863px;top:597px;width:1px;height:4px;background:#000"></div>
<div class="t" style="left:863px;top:601.5px;font-size:9.3px;color:#000;-webkit-text-stroke:0.2px #000">7 May 16:00</div>
<div class="a" style="left:927px;top:597px;width:1px;height:4px;background:#000"></div>
<div class="t" style="left:927px;top:601.5px;font-size:9.3px;color:#000;-webkit-text-stroke:0.2px #000">12 May 08:00</div>
<div class="a" style="left:991px;top:597px;width:1px;height:4px;background:#000"></div>
<div class="t" style="left:991px;top:601.5px;font-size:9.3px;color:#000;-webkit-text-stroke:0.2px #000">17 May 00:00</div>
<div class="a" style="left:1055px;top:597px;width:1px;height:4px;background:#000"></div>
<div class="t" style="left:1055px;top:601.5px;font-size:9.3px;color:#000;-webkit-text-stroke:0.2px #000">19 May 16:00</div>
<svg style="left:0;top:0" width="1365" height="697"><rect x="975" y="261" width="1" height="49" fill="#000"/><rect x="974.5" y="277.5" width="2" height="17" fill="#fff" stroke="#000" stroke-width="1"/><rect x="979" y="272" width="1" height="46" fill="#000"/><rect x="978" y="277" width="3" height="28" fill="#000"/><rect x="983" y="295" width="1" height="48" fill="#000"/><rect x="982" y="304" width="3" height="35" fill="#000"/><rect x="987" y="333" width="1" height="22" fill="#000"/><rect x="986" y="338" width="3" height="6" fill="#000"/><rect x="991" y="297" width="1" height="49" fill="#000"/><rect x="990.5" y="302.5" width="2" height="25" fill="#fff" stroke="#000" stroke-width="1"/><rect x="995" y="277" width="1" height="36" fill="#000"/><rect x="994.5" y="288.5" width="2" height="14" fill="#fff" stroke="#000" stroke-width="1"/><rect x="999" y="263" width="1" height="46" fill="#000"/><rect x="998.5" y="281.5" width="2" height="8" fill="#fff" stroke="#000" stroke-width="1"/><rect x="1003" y="220" width="1" height="68" fill="#000"/><rect x="1002.5" y="239.5" width="2" height="42" fill="#fff" stroke="#000" stroke-width="1"/><rect x="1007" y="237" width="1" height="76" fill="#000"/><rect x="1006" y="239" width="3" height="52" fill="#000"/><rect x="1011" y="274" width="1" height="25" fill="#000"/><rect x="1010" y="290" width="3" height="6" fill="#000"/><rect x="1015" y="282" width="1" height="31" fill="#000"/><rect x="1014" y="296" width="3" height="13" fill="#000"/><rect x="1019" y="305" width="1" height="35" fill="#000"/><rect x="1018" y="308" width="3" height="13" fill="#000"/><rect x="1023" y="267" width="1" height="69" fill="#000"/><rect x="1022.5" y="269.5" width="2" height="52" fill="#fff" stroke="#000" stroke-width="1"/><rect x="1027" y="258" width="1" height="29" fill="#000"/><rect x="1026" y="269" width="3" height="8" fill="#000"/><rect x="1031" y="237" width="1" height="42" fill="#000"/><rect x="1030.5" y="261.5" width="2" height="15" fill="#fff" stroke="#000" stroke-width="1"/><rect x="1035" y="235" width="1" height="33" fill="#000"/><rect x="1034.5" y="247.5" width="2" height="14" fill="#fff" stroke="#000" stroke-width="1"/><rect x="1039" y="222" width="1" height="51" fill="#000"/><rect x="1038.5" y="235.5" width="2" height="12" fill="#fff" stroke="#000" stroke-width="1"/><rect x="1043" y="203" width="1" height="36" fill="#000"/><rect x="1042.5" y="210.5" width="2" height="25" fill="#fff" stroke="#000" stroke-width="1"/><rect x="1047" y="136" width="1" height="79" fill="#000"/><rect x="1046.5" y="162.5" width="2" height="48" fill="#fff" stroke="#000" stroke-width="1"/><rect x="1051" y="115" width="1" height="69" fill="#000"/><rect x="1050.5" y="124.5" width="2" height="38" fill="#fff" stroke="#000" stroke-width="1"/><rect x="1055" y="110" width="1" height="69" fill="#000"/><rect x="1054" y="123" width="3" height="52" fill="#000"/><rect x="1059" y="127" width="1" height="57" fill="#000"/><rect x="1058.5" y="165.5" width="2" height="9" fill="#fff" stroke="#000" stroke-width="1"/><rect x="1063" y="138" width="1" height="37" fill="#000"/><rect x="1062.5" y="162.5" width="2" height="8" fill="#fff" stroke="#000" stroke-width="1"/><rect x="1067" y="139" width="1" height="62" fill="#000"/><rect x="1066" y="162" width="3" height="39" fill="#000"/><rect x="1071" y="161" width="1" height="49" fill="#000"/><rect x="1070.5" y="173.5" width="2" height="26" fill="#fff" stroke="#000" stroke-width="1"/><rect x="1075" y="158" width="1" height="46" fill="#000"/><rect x="1074" y="173" width="3" height="26" fill="#000"/><rect x="1079" y="181" width="1" height="48" fill="#000"/><rect x="1078.5" y="191.5" width="2" height="7" fill="#fff" stroke="#000" stroke-width="1"/><rect x="1083" y="180" width="1" height="26" fill="#000"/><rect x="1082" y="191" width="3" height="12" fill="#000"/><rect x="1087" y="162" width="1" height="42" fill="#000"/><rect x="1086.5" y="165.5" width="2" height="36" fill="#fff" stroke="#000" stroke-width="1"/><rect x="1091" y="133" width="1" height="36" fill="#000"/><rect x="1090.5" y="138.5" width="2" height="27" fill="#fff" stroke="#000" stroke-width="1"/><rect x="1095" y="106" width="1" height="41" fill="#000"/><rect x="1094" y="138" width="3" height="8" fill="#000"/></svg>
<div class="a" style="left:0px;top:617px;width:1365px;height:1px;background:#a8a8a8"></div>
<div class="a" style="left:0px;top:618px;width:1365px;height:1px;background:#fff"></div>
<div class="a" style="left:0px;top:619px;width:1365px;height:3px;background:#f0f0f0"></div>
<svg style="left:4px;top:625px" width="7" height="6" viewBox="0 0 7 6"><path d="M0.7 0.5l5.6 5M6.3 0.5l-5.6 5" stroke="#000" stroke-width="1.6"/></svg>
<div class="a" style="left:1px;top:636px;width:13px;height:61px;background:linear-gradient(90deg,#c8d8ea,#d6e2ee)"></div>
<div class="t" style="left:2px;top:722px;font-size:11.5px;transform:rotate(-90deg);transform-origin:0 0;color:#000">Терминал</div>
<div class="a" style="left:15px;top:622px;width:1347px;height:75px;background:#fff;border-left:1px solid #a0a0a0;border-top:1px solid #a0a0a0"></div>
<div class="a" style="left:1361px;top:622px;width:2px;height:75px;background:#e4e4e4"></div>
<div class="a" style="left:148px;top:623px;width:1px;height:24px;background:#e2e2e2"></div>
<div class="a" style="left:332px;top:623px;width:1px;height:24px;background:#e2e2e2"></div>
<div class="a" style="left:424px;top:623px;width:1px;height:24px;background:#e2e2e2"></div>
<div class="a" style="left:495px;top:623px;width:1px;height:24px;background:#e2e2e2"></div>
<div class="a" style="left:587px;top:623px;width:1px;height:24px;background:#e2e2e2"></div>
<div class="a" style="left:689px;top:623px;width:1px;height:24px;background:#e2e2e2"></div>
<div class="a" style="left:790px;top:623px;width:1px;height:24px;background:#e2e2e2"></div>
<div class="a" style="left:893px;top:623px;width:1px;height:24px;background:#e2e2e2"></div>
<div class="a" style="left:995px;top:623px;width:1px;height:24px;background:#e2e2e2"></div>
<div class="a" style="left:1097px;top:623px;width:1px;height:24px;background:#e2e2e2"></div>
<div class="a" style="left:1199px;top:623px;width:1px;height:24px;background:#e2e2e2"></div>
<div class="t" style="left:22px;top:629.5px;font-size:11.5px;color:#000;">Ордер</div>
<div class="t" style="left:69px;top:631px;font-size:9px;color:#777;font-style:italic">/</div>
<div class="t" style="right:1038.5px;top:629.5px;font-size:11.5px;color:#000;">Время</div>
<div class="t" style="right:946px;top:629.5px;font-size:11.5px;color:#000;">Тип</div>
<div class="t" style="right:875.5px;top:629.5px;font-size:11.5px;color:#000;">Объем</div>
<div class="t" style="right:783px;top:629.5px;font-size:11.5px;color:#000;">Символ</div>
<div class="t" style="right:681.5px;top:629.5px;font-size:11.5px;color:#000;">Цена</div>
<div class="t" style="right:579.5px;top:629.5px;font-size:11.5px;color:#000;">S / L</div>
<div class="t" style="right:478px;top:629.5px;font-size:11.5px;color:#000;">T / P</div>
<div class="t" style="right:375px;top:629.5px;font-size:11.5px;color:#000;">Цена</div>
<div class="t" style="right:273.5px;top:629.5px;font-size:11.5px;color:#000;">Комиссия</div>
<div class="t" style="right:171.5px;top:629.5px;font-size:11.5px;color:#000;">Своп</div>
<div class="t" style="right:9px;top:629.5px;font-size:11.5px;color:#000;">Прибыль</div>
<div class="a" style="left:16px;top:647px;width:1345px;height:20px;background:#c8c8c8"></div>
<svg style="left:23px;top:653px" width="9" height="9" viewBox="0 0 9 9"><circle cx="4" cy="4" r="3.3" fill="#c4c4c4" stroke="#8a8a8a" stroke-width="1.2"/></svg>
<div class="t" style="left:38px;top:651.5px;font-size:11.4px;color:#000;font-weight:bold">Баланс: 0.00 USD&nbsp; Средства: 0.00&nbsp; Свободная маржа: 0.00</div>
<div class="t" style="right:8px;top:651.5px;font-size:11.4px;color:#000;font-weight:bold">0.00</div>
<div class="a" style="left:220px;top:219px;width:755px;height:381px;background:#f0f0f0;border:1px solid #7a7a7a;box-shadow:1px 3px 14px 2px rgba(0,0,0,0.32)"></div>
<div class="a" style="left:221px;top:220px;width:753px;height:30px;background:#fff"></div>
<div class="t" style="left:229.5px;top:229.5px;font-size:11.5px;color:#000;">Ордер</div>
<div class="a" style="left:855px;top:234px;width:10px;height:1px;background:#000"></div>
<div class="a" style="left:900px;top:229px;width:10px;height:10px;border:1px solid #c8c8c8"></div>
<svg style="left:946px;top:229px" width="11" height="11" viewBox="0 0 11 11"><path d="M0.5 0.5L10.5 10.5M10.5 0.5L0.5 10.5" stroke="#000" stroke-width="1.1"/></svg>
<div class="a" style="left:229px;top:263px;width:299px;height:327px;background:#fff;border-top:1px solid #a0a0a0;border-left:1px solid #a0a0a0;border-right:1px solid #e3e3e3;border-bottom:1px solid #e3e3e3"></div>
<div class="a" style="left:230px;top:264px;width:1px;height:325px;background:#696969"></div>
<div class="a" style="left:230px;top:264px;width:297px;height:1px;background:#696969"></div>
<svg style="left:0;top:0" width="1365" height="697"><path d="M266.5 268V586" stroke="#c0c0c0" stroke-dasharray="3 3"/><path d="M298.5 268V586" stroke="#c0c0c0" stroke-dasharray="3 3"/><path d="M330.5 268V586" stroke="#c0c0c0" stroke-dasharray="3 3"/><path d="M362.5 268V586" stroke="#c0c0c0" stroke-dasharray="3 3"/><path d="M394.5 268V586" stroke="#c0c0c0" stroke-dasharray="3 3"/><path d="M426.5 268V586" stroke="#c0c0c0" stroke-dasharray="3 3"/><path d="M458.5 268V586" stroke="#c0c0c0" stroke-dasharray="3 3"/><path d="M234 297.5H483" stroke="#c0c0c0" stroke-dasharray="3 3"/><path d="M483 297.5h3" stroke="#000"/><path d="M234 329.5H483" stroke="#c0c0c0" stroke-dasharray="3 3"/><path d="M483 329.5h3" stroke="#000"/><path d="M234 361.5H483" stroke="#c0c0c0" stroke-dasharray="3 3"/><path d="M483 361.5h3" stroke="#000"/><path d="M234 393.5H483" stroke="#c0c0c0" stroke-dasharray="3 3"/><path d="M483 393.5h3" stroke="#000"/><path d="M234 425.5H483" stroke="#c0c0c0" stroke-dasharray="3 3"/><path d="M483 425.5h3" stroke="#000"/><path d="M234 457.5H483" stroke="#c0c0c0" stroke-dasharray="3 3"/><path d="M483 457.5h3" stroke="#000"/><path d="M234 489.5H483" stroke="#c0c0c0" stroke-dasharray="3 3"/><path d="M483 489.5h3" stroke="#000"/><path d="M234 521.5H483" stroke="#c0c0c0" stroke-dasharray="3 3"/><path d="M483 521.5h3" stroke="#000"/><path d="M234 553.5H483" stroke="#c0c0c0" stroke-dasharray="3 3"/><path d="M483 553.5h3" stroke="#000"/><path d="M235.5 276L235.5 326L236.5 326L236.5 375L239.5 381L241.5 384L244 386L245.5 392L247.5 394L248 413L250.5 418L253.5 407L253.5 546.5L258.5 547L260 540L261 536L262 537L264.5 541L267 547L270 541L271.5 543L272.5 553L274.5 553L277.5 544L279.5 547L281 544L283 544L284.5 558L286.5 561L289.5 555L292 555L294 561L296 559L297.5 567L298.5 564.5L483 564.5" stroke="#ff5a5a" fill="none" stroke-width="1"/><path d="M234 341.5L235.5 341.5L235.5 364M236 376L236 386L238 387L241.5 391L242.5 397L245.5 398L246.5 402L247.5 404L247.5 412L249 418L250.5 426L252 418L253 416M253.5 476L253.5 488M254.5 546L254.5 558L257.5 558L258.5 561L260 550L261 552L263.5 554L266.5 558L269 555L271 558L273.5 570L275 565L277 562L279.5 563.5L281.5 561L284 565L285.5 575L287.5 572L289.5 564L291 569L293.5 571L295 575L297.5 578.5L483 578.5" stroke="#0a5aff" fill="none" stroke-width="1.3"/><rect x="233.5" y="267.5" width="250" height="319" fill="none" stroke="#000"/></svg>
<div class="t" style="left:235.5px;top:270px;font-size:9.6px;color:#000;letter-spacing:-0.3px">EURGBP_i</div>
<div class="t" style="left:489px;top:292.5px;font-size:9.4px;color:#000;letter-spacing:-0.2px;-webkit-text-stroke:0.12px #000">0.86152</div>
<div class="t" style="left:489px;top:324.5px;font-size:9.4px;color:#000;letter-spacing:-0.2px;-webkit-text-stroke:0.12px #000">0.86141</div>
<div class="t" style="left:489px;top:356.5px;font-size:9.4px;color:#000;letter-spacing:-0.2px;-webkit-text-stroke:0.12px #000">0.86129</div>
<div class="t" style="left:489px;top:388.5px;font-size:9.4px;color:#000;letter-spacing:-0.2px;-webkit-text-stroke:0.12px #000">0.86118</div>
<div class="t" style="left:489px;top:420.5px;font-size:9.4px;color:#000;letter-spacing:-0.2px;-webkit-text-stroke:0.12px #000">0.86107</div>
<div class="t" style="left:489px;top:452.5px;font-size:9.4px;color:#000;letter-spacing:-0.2px;-webkit-text-stroke:0.12px #000">0.86095</div>
<div class="t" style="left:489px;top:484.5px;font-size:9.4px;color:#000;letter-spacing:-0.2px;-webkit-text-stroke:0.12px #000">0.86084</div>
<div class="t" style="left:489px;top:516.5px;font-size:9.4px;color:#000;letter-spacing:-0.2px;-webkit-text-stroke:0.12px #000">0.86072</div>
<div class="t" style="left:489px;top:548.5px;font-size:9.4px;color:#000;letter-spacing:-0.2px;-webkit-text-stroke:0.12px #000">0.86061</div>
<div class="a" style="left:484px;top:584px;width:43px;height:3px;overflow:hidden"><div class="t" style="left:5px;top:-2px;font-size:9.5px;letter-spacing:-0.35px">0.86050</div></div>
<div class="a" style="left:485px;top:559px;width:41px;height:11px;background:#f86a6a"></div>
<div class="t" style="left:489px;top:559.6px;font-size:9.4px;color:#fff;letter-spacing:-0.2px;-webkit-text-stroke:0.12px #fff">0.86058</div>
<div class="a" style="left:485px;top:573px;width:41px;height:11px;background:#1660ff"></div>
<div class="t" style="left:489px;top:573.6px;font-size:9.4px;color:#fff;letter-spacing:-0.2px;-webkit-text-stroke:0.12px #fff">0.86053</div>
<div class="t" style="right:740px;top:268.5px;font-size:11px;color:#000;letter-spacing:-0.35px">Символ:</div>
<div class="t" style="right:740px;top:294.5px;font-size:11px;color:#000;letter-spacing:-0.3px">Объем:</div>
<div class="t" style="right:740px;top:320.5px;font-size:11px;color:#000;letter-spacing:-0.3px">Стоп Лосс:</div>
<div class="t" style="right:740px;top:346.5px;font-size:11px;color:#000;letter-spacing:-0.3px">Комментарий:</div>
<div class="t" style="right:740px;top:372.5px;font-size:11px;color:#000;letter-spacing:-0.3px">Тип:</div>
<div class="t" style="right:522px;top:320.5px;font-size:11px;color:#000;letter-spacing:-0.05px">Тейк Профит:</div>
<div class="a" style="left:634px;top:263px;width:323px;height:21px;background:#e5e5e5;border:1px solid #adadad"></div>
<div class="t" style="left:637px;top:268.5px;font-size:11px;color:#000;letter-spacing:-0.32px">EURGBP_i, Euro vs Great Britain Pound</div>
<svg style="left:944px;top:271px" width="9" height="6" viewBox="0 0 9 6"><path d="M0.5 0.5L4.5 4.5L8.5 0.5" stroke="#444" fill="none" stroke-width="1"/></svg>
<div class="a" style="left:634px;top:289px;width:105px;height:21px;background:#fff;border:1px solid #7a7a7a"></div>
<div class="t" style="left:638px;top:294.5px;font-size:11px;color:#000;">0.01</div>
<svg style="left:726px;top:297px" width="9" height="6" viewBox="0 0 9 6"><path d="M0.5 0.5L4.5 4.5L8.5 0.5" stroke="#444" fill="none" stroke-width="1"/></svg>
<div class="a" style="left:634px;top:315px;width:105px;height:20px;background:#fff;border:1px solid #7a7a7a"></div>
<div class="a" style="left:722px;top:316px;width:16px;height:18px;background:#f0f0f0;border:1px solid #d8d8d8"></div>
<div class="a" style="left:723px;top:325px;width:14px;height:1px;background:#b0b0b0"></div>
<svg style="left:726px;top:318px" width="8" height="12" viewBox="0 0 8 12"><path d="M4 0.5L7 4H1z M4 11.5L7 8H1z" fill="#000"/></svg>
<div class="t" style="right:648px;top:320px;font-size:11px;color:#000;">0.00000</div>
<div class="a" style="left:851px;top:315px;width:105px;height:20px;background:#fff;border:1px solid #7a7a7a"></div>
<div class="a" style="left:939px;top:316px;width:16px;height:18px;background:#f0f0f0;border:1px solid #d8d8d8"></div>
<div class="a" style="left:940px;top:325px;width:14px;height:1px;background:#b0b0b0"></div>
<svg style="left:943px;top:318px" width="8" height="12" viewBox="0 0 8 12"><path d="M4 0.5L7 4H1z M4 11.5L7 8H1z" fill="#000"/></svg>
<div class="t" style="right:431px;top:320px;font-size:11px;color:#000;">0.00000</div>
<div class="a" style="left:634px;top:341px;width:323px;height:20px;background:#fff;border:1px solid #7a7a7a"></div>
<div class="a" style="left:634px;top:367px;width:323px;height:21px;background:#e5e5e5;border:1px solid #adadad"></div>
<div class="t" style="left:637px;top:372.5px;font-size:11px;color:#000;letter-spacing:-0.2px">Рыночное исполнение</div>
<svg style="left:944px;top:375px" width="9" height="6" viewBox="0 0 9 6"><path d="M0.5 0.5L4.5 4.5L8.5 0.5" stroke="#444" fill="none" stroke-width="1"/></svg>
<div class="a" style="left:536px;top:402px;width:428px;height:188px;border:1px solid #dcdcdc;border-right-color:#dcdcdc"></div>
<div class="a" style="left:541px;top:396px;width:117px;height:12px;background:#f0f0f0"></div>
<div class="t" style="left:544px;top:397.5px;font-size:11px;color:#000;letter-spacing:-0.05px">Исполнение по рынку</div>
<div class="t" style="left:644.5px;top:431.5px;font-size:25.5px;color:#000;">0.8605</div>
<div class="t" style="left:724.5px;top:436.8px;font-size:18.5px;color:#000;">3</div>
<div class="t" style="left:763.5px;top:431.5px;font-size:25.5px;color:#000;">0.8605</div>
<div class="t" style="left:843.5px;top:436.8px;font-size:18.5px;color:#000;">8</div>
<svg style="left:744px;top:434px" width="11" height="24" viewBox="0 0 11 24"><path d="M9.3 0.5L1.7 23" stroke="#000" stroke-width="2.1"/></svg>
<div class="a" style="left:534px;top:463px;width:425px;height:44px;border:3px solid #ff0000;border-radius:1px"></div>
<div class="a" style="left:552px;top:478px;width:186px;height:21px;background:#f0f0f0;border:1px solid #adadad"></div>
<div class="a" style="left:554px;top:480px;width:182px;height:17px;background:#ff8080;border:1px solid #e87070;border-radius:2px"></div>
<div class="t" style="left:610.5px;top:484px;font-size:11px;color:#000;letter-spacing:-0.18px">Sell by Market</div>
<div class="a" style="left:762px;top:478px;width:186px;height:21px;background:#f0f0f0;border:1px solid #adadad"></div>
<div class="a" style="left:764px;top:480px;width:182px;height:17px;background:#a0c0ff;border:1px solid #7aa0ea;border-radius:2px"></div>
<div class="t" style="left:819px;top:484px;font-size:11px;color:#000;letter-spacing:-0.18px">Buy by Market</div>
<div class="a" style="left:552px;top:508px;width:396px;height:21px;background:#c8c8c8;border:1px solid #d8d8d8"></div>
<div class="t" style="left:536px;width:428px;text-align:center;top:543px;font-size:11px;line-height:13px;white-space:pre">Внимание! Цена исполнения ордера зависит от текущей рыночной ситуации,
разница с запрошенной ценой может быть значительна!</div></body></html>
